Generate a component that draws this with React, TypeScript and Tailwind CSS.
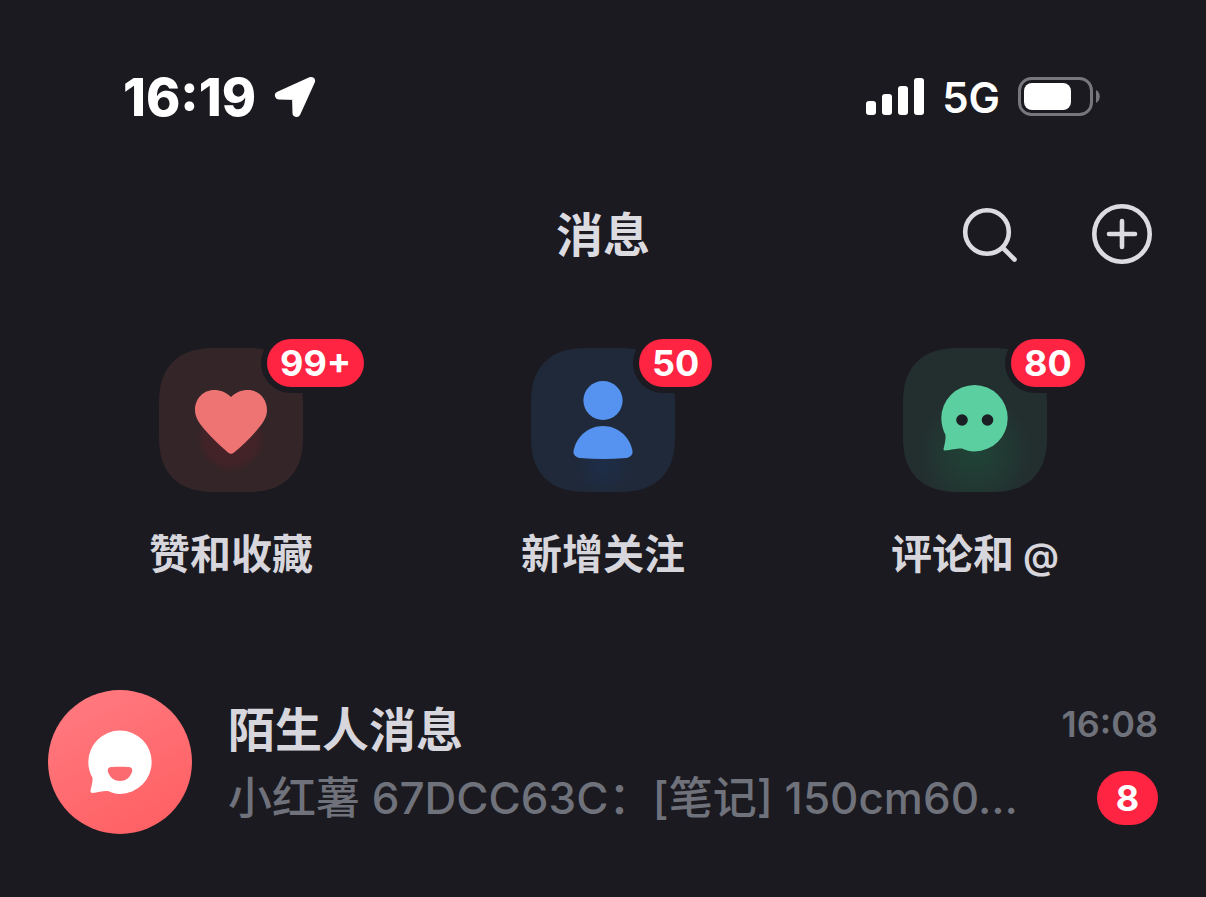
import React from 'react';

interface Category {
  label: string;
  suffix?: string;
  badge: string;
  icon: React.ReactNode;
}

// Rounded tile outline shared by all category icons
const TILE = 'M0 54C0 19 19 0 54 0H90C125 0 144 19 144 54V90C144 125 125 144 90 144H54C19 144 0 125 0 90Z';

const HeartIcon = () => (
  <svg viewBox="0 0 144 144" className="size-36" aria-hidden="true">
    <defs>
      <radialGradient id="heart-glow" cx="72" cy="90" r="34" gradientUnits="userSpaceOnUse">
        <stop offset="0" stopColor="#4a2228" />
        <stop offset="0.8" stopColor="#402328" />
        <stop offset="1" stopColor="#342528" />
      </radialGradient>
    </defs>
    <path d={TILE} fill="#342528" />
    <circle cx="72" cy="90" r="34" fill="url(#heart-glow)" />
    <path
      d="M72 49C66 43 60 42 55 42C44 42 36 51 36 62C36 70 41 76 46 82C53 90 61 98 69 104.500Q72 107 75 104.500C83 98 91 90 98 82C103 76 108 70 108 62C108 51 100 42 89 42C84 42 78 43 72 49Z"
      fill="#ed7472"
    />
  </svg>
);

const PersonIcon = () => (
  <svg viewBox="0 0 144 144" className="size-36" aria-hidden="true">
    <defs>
      <radialGradient id="person-glow" cx="72" cy="118" r="28" gradientUnits="userSpaceOnUse">
        <stop offset="0" stopColor="#1e2d49" />
        <stop offset="1" stopColor="#1f293a" />
      </radialGradient>
    </defs>
    <path d={TILE} fill="#1f293a" />
    <ellipse cx="72" cy="116" rx="28" ry="26" fill="url(#person-glow)" />
    <circle cx="72" cy="52.500" r="19.600" fill="#5693f0" />
    <path
      d="M72 78C87 78 99 89 101.500 103C102 107 99 109.500 95 110C80 111.300 64 111.300 49 110C45 109.500 42 107 42.500 103C45 89 57 78 72 78Z"
      fill="#5693f0"
    />
  </svg>
);

const CommentIcon = () => (
  <svg viewBox="0 0 144 144" className="size-36" aria-hidden="true">
    <defs>
      <radialGradient id="comment-glow" cx="72" cy="104" r="58" gradientUnits="userSpaceOnUse">
        <stop offset="0" stopColor="#1f4437" />
        <stop offset="0.5" stopColor="#213a33" />
        <stop offset="1" stopColor="#232e2f" />
      </radialGradient>
    </defs>
    <path d={TILE} fill="url(#comment-glow)" />
    <path
      d="M71.500 37A33.200 33.200 0 1 1 71.500 103.400C66 103.400 62 102 59 100.500C56 100 49 101.500 42 102.500Q40.300 102.500 40.500 101C41.500 97 43 91 42.500 87C40 82 38.300 76 38.300 70.200A33.200 33.200 0 0 1 71.500 37Z"
      fill="#5bcfa0"
    />
    <circle cx="59" cy="72" r="5.800" fill="#1a1f23" />
    <circle cx="84.500" cy="72" r="5.800" fill="#1a1f23" />
  </svg>
);

const categories: Category[] = [
  { label: '赞和收藏', badge: '99+', icon: <HeartIcon /> },
  { label: '新增关注', badge: '50', icon: <PersonIcon /> },
  { label: '评论和', suffix: ' @', badge: '80', icon: <CommentIcon /> },
];

const StatusBar = () => (
  <div className="flex h-12 items-center justify-between pl-[123px] pr-[106px] text-white">
    <div className="flex items-center gap-[18px]">
      <span className="pt-1 text-[52px] font-extrabold leading-none">16:19</span>
      <svg viewBox="0 0 42 42" className="size-[42px]" aria-hidden="true">
        <path
          d="M37 6L5 20.500L22 21L22.500 38Z"
          fill="white"
          stroke="white"
          strokeWidth="8"
          strokeLinejoin="round"
        />
      </svg>
    </div>
    <div className="flex items-center">
      <svg viewBox="0 0 58 37" className="h-[37px] w-[58px]" fill="white" aria-hidden="true">
        <rect x="0" y="23" width="10" height="14" rx="3" />
        <rect x="16" y="16" width="10" height="21" rx="3" />
        <rect x="32" y="8" width="10" height="29" rx="3" />
        <rect x="48" y="0" width="10" height="37" rx="3" />
      </svg>
      <span className="ml-[18px] pt-1 text-[42px] font-semibold leading-none">5G</span>
      <svg viewBox="0 0 82 39" className="ml-[18px] h-[39px] w-[82px]" aria-hidden="true">
        <rect x="1.500" y="1.500" width="72" height="36" rx="12" fill="none" stroke="#77767b" strokeWidth="3" />
        <rect x="6" y="6" width="47" height="27" rx="8" fill="white" />
        <path d="M78 13C83 15.500 83 23.500 78 26Z" fill="#77767b" />
      </svg>
    </div>
  </div>
);

const Header = () => (
  <header className="mt-[66px] grid h-24 grid-cols-[1fr_auto_1fr] items-center px-[54px]">
    <h1 className="col-start-2 text-[47px] font-bold leading-none text-[#dcdce0]">消息</h1>
    <div className="flex items-center justify-end gap-[74px]">
      <button type="button" aria-label="搜索">
        <svg viewBox="0 0 56 56" className="size-14" fill="none" stroke="#dcdce0" strokeWidth="4.600" aria-hidden="true">
          <circle cx="25" cy="26" r="21.800" />
          <path d="M41 42L52.500 53.500" strokeLinecap="round" />
        </svg>
      </button>
      <button type="button" aria-label="添加">
        <svg viewBox="0 0 60 60" className="size-[60px]" fill="none" stroke="#dcdce0" strokeWidth="4.600" aria-hidden="true">
          <circle cx="30" cy="30" r="27.700" />
          <path d="M17 30H43M30 17V43" strokeLinecap="round" />
        </svg>
      </button>
    </div>
  </header>
);

const CategoryButton = ({ label, suffix, badge, icon }: Category) => (
  <button type="button" className="flex flex-col items-center">
    <span className="relative">
      {icon}
      <span className="absolute -top-[9px] left-[108px] flex h-12 items-center rounded-full bg-[#ff2442] px-[13px] text-[36px] font-bold leading-none text-white ring-6 ring-[#1b1a20]">
        {badge}
      </span>
    </span>
    <span className="mt-8 whitespace-pre text-[41px] font-bold leading-[60px] text-[#d6d6dc]">
      {label}
      {suffix && <span className="text-[36px] font-semibold leading-none">{suffix}</span>}
    </span>
  </button>
);

const StrangerAvatar = () => (
  <svg viewBox="0 0 144 144" className="size-36 shrink-0" aria-hidden="true">
    <defs>
      <linearGradient id="avatar-fill" x1="0.200" y1="0" x2="0.700" y2="1">
        <stop offset="0" stopColor="#ff7a80" />
        <stop offset="1" stopColor="#ff6064" />
      </linearGradient>
    </defs>
    <circle cx="72" cy="72" r="72" fill="url(#avatar-fill)" />
    <path
      d="M72 40.500A31.700 31.700 0 1 1 72 103.900C67 103.900 63 102.500 60 101C56 100.500 50 102 44.500 103Q42 103 42.500 100.500C43.500 96 45 91 44.500 88C42 83 40.300 78 40.300 72.200A31.700 31.700 0 0 1 72 40.500Z"
      fill="white"
    />
    <path
      d="M63 77C68 76.600 76 76.600 81 77C83.500 77.300 84.600 79 84.200 81C82.500 88 77 91 72 91C67 91 61.500 88 59.800 81C59.400 79 60.500 77.300 63 77Z"
      fill="#fb6b70"
    />
  </svg>
);

const MessageRow = () => (
  <a href="#strangers" className="mt-[106px] flex h-36 gap-9 px-12">
    <StrangerAvatar />
    <div className="flex min-w-0 flex-1 flex-col justify-center pt-1">
      <span className="text-[47px] font-bold leading-[68px] text-[#d6d6dc]">陌生人消息</span>
      <span className="truncate text-[44px] font-medium leading-[68px] text-[#6f727b]">
        小红薯 67DCC63C：[笔记] 150cm60...
      </span>
    </div>
    <div className="flex shrink-0 flex-col items-end">
      <time className="mt-3 text-[36px] font-semibold leading-[44px] text-[#6f727b]">16:08</time>
      <span className="mt-[25px] flex h-[54px] w-[61px] items-center justify-center rounded-full bg-[#ff2442] text-[36px] font-bold leading-none text-white">
        8
      </span>
    </div>
  </a>
);

const App: React.FC = () => {
  return (
    <main
      lang="zh-CN"
      className="min-h-screen bg-[#1b1a20] pt-[72px] font-['Inter','Noto_Sans_CJK_SC',sans-serif]"
    >
      <StatusBar />
      <Header />
      <nav className="mt-[66px] grid grid-cols-3 px-[45px]">
        {categories.map((item) => (
          <CategoryButton key={item.label} {...item} />
        ))}
      </nav>
      <MessageRow />
    </main>
  );
};

export default App;
